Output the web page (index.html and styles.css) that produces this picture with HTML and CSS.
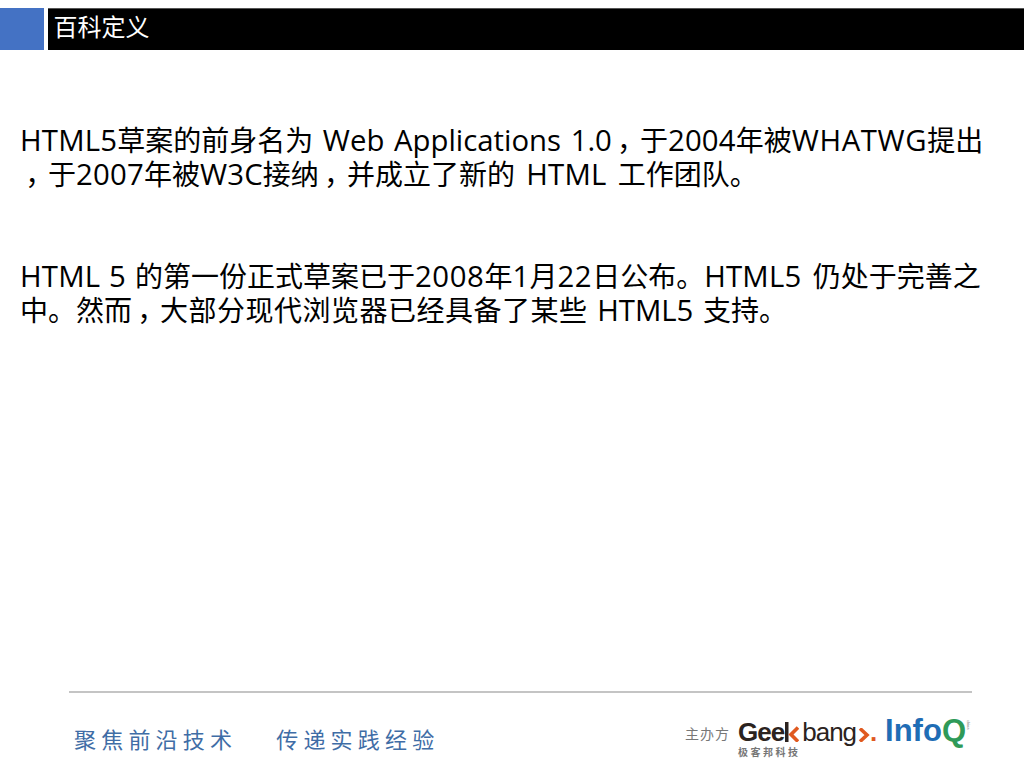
FILE: index.html
```html
<!DOCTYPE html>
<html lang="zh">
<head>
<meta charset="utf-8">
<title>百科定义</title>
<link rel="stylesheet" href="styles.css">
</head>
<body>
<div class="slide">
  <header class="head">
    <div class="square"></div>
    <h1 class="title">百科定义</h1>
  </header>
  <main class="content">
    <p class="para"><span class="line"><span class="lat">HTML5</span>草案的前身名为<span class="lat tight"> Web Applications 1.0</span><span class="comma">，</span>于<span class="lat">2004</span>年被<span class="lat wide">WHATWG</span>提出</span><span class="line"><span class="comma">，</span>于<span class="lat">2007</span>年被<span class="lat">W3C</span>接纳<span class="comma">，</span>并成立了新的<span class="lat"> HTML </span>工作团队。</span></p>
    <p class="para"><span class="line"><span class="lat snug">HTML 5 </span>的第一份正式草案已于<span class="lat wide">2008</span>年<span class="lat">1</span>月<span class="lat wide">22</span>日公布。<span class="lat">HTML5 </span>仍处于完善之</span><span class="line">中。然而<span class="comma">，</span><span class="spread">大部分现代浏览器已经具备了某些</span><span class="lat tight"> HTML5 </span>支持。</span></p>
  </main>
  <footer class="foot">
    <div class="rule"></div>
    <div class="foot-row">
      <div class="slogan"><span>聚焦前沿技术</span><span>传递实践经验</span></div>
      <div class="logos">
        <span class="host">主办方</span>
        <div class="geek">
          <div class="geek-name"><span>Gee</span><svg class="k-mark" width="14" height="20" viewBox="0 0 14 20"><rect x="0" y="0" width="3.5" height="20" fill="#2b2320"/><path d="M13 5.5 L6 12.5 L13 19.5" fill="none" stroke="#e0591f" stroke-width="3.6"/></svg><span class="bang">bang</span><svg class="arrow-mark" width="12" height="14" viewBox="0 0 12 14"><path d="M2 0.5 L9 7 L2 13.5" fill="none" stroke="#e0591f" stroke-width="3.6"/></svg><span class="dot">.</span></div>
          <div class="geek-cn">极客邦科技</div>
        </div>
        <div class="infoq">Info<span class="q">Q</span></div>
        <span class="tiny">china</span>
      </div>
    </div>
  </footer>
</div>
</body>
</html>
```
FILE: styles.css
```css
* { box-sizing: border-box; }
html, body { margin: 0; padding: 0; background: #fff; }
.slide {
  width: 1024px;
  height: 768px;
  display: flex;
  flex-direction: column;
  overflow: hidden;
  font-family: "Open Sans", "Noto Sans CJK SC", sans-serif;
}
.head {
  display: flex;
  gap: 4px;
  height: 42px;
  margin-top: 8px;
}
.square {
  width: 44px;
  background: #4472c4;
}
.title {
  flex: 1;
  margin: 0;
  background: #000;
  border-top: 1px solid #555;
  color: #fff;
  font-size: 24px;
  font-weight: 400;
  line-height: 36px;
  padding-left: 5.5px;
}
.content {
  flex: 1;
  padding: 73px 0 0 20px;
  color: #000;
  font-size: 28px;
  line-height: 34px;
}
.para { margin: 0 0 68px; }
.line { display: block; height: 34px; white-space: nowrap; }
.lat {
  font-size: 29.33px;
  line-height: 34px;
  letter-spacing: 0.2px;
  word-spacing: 3.5px;
}
.tight { letter-spacing: 0; word-spacing: 2px; }
.snug { word-spacing: 1px; }
.wide { letter-spacing: 0.6px; }
.spread { letter-spacing: 0.5px; }
.comma {
  display: inline-block;
  width: 1em;
  text-align: center;
  font-feature-settings: "palt";
}
.foot { padding: 0 52px 0 69px; height: 77px; }
.rule { height: 2px; background: #c4c4c4; }
.foot-row {
  display: flex;
  justify-content: space-between;
  align-items: flex-start;
  padding-top: 24px;
}
.slogan {
  display: flex;
  gap: 39px;
  padding: 8px 0 0 5px;
  color: #3f6da6;
  font-size: 22px;
  line-height: 28px;
  letter-spacing: 5.2px;
  white-space: nowrap;
}
.logos {
  display: flex;
  align-items: flex-start;
  margin-right: 2px;
  white-space: nowrap;
  font-family: "Liberation Sans", "Noto Sans CJK SC", sans-serif;
}
.host {
  margin-top: 8px;
  width: 53px;
  color: #777;
  font-size: 14px;
  line-height: 18px;
  letter-spacing: 1px;
}
.geek { width: 147px; color: #2b2320; }
.geek-name {
  display: flex;
  align-items: flex-end;
  height: 30px;
  font-size: 26px;
  font-weight: 700;
  line-height: 30px;
  letter-spacing: -1px;
}
.k-mark { margin: 0 3px 5px 1px; }
.arrow-mark { margin: 0 0 5px 2px; }
.bang { font-weight: 400; letter-spacing: -1px; }
.dot { color: #e0591f; }
.geek-cn {
  color: #777;
  font-size: 10px;
  font-weight: 700;
  line-height: 12px;
  letter-spacing: 2.5px;
}
.infoq {
  margin-top: -3px;
  color: #1f6db5;
  font-size: 31px;
  font-weight: 700;
  line-height: 34px;
}
.q { color: #2f9a58; }
.tiny {
  margin-top: 3px;
  width: 4px;
  color: #888;
  font-size: 4px;
  line-height: 4px;
  writing-mode: vertical-rl;
}
```
